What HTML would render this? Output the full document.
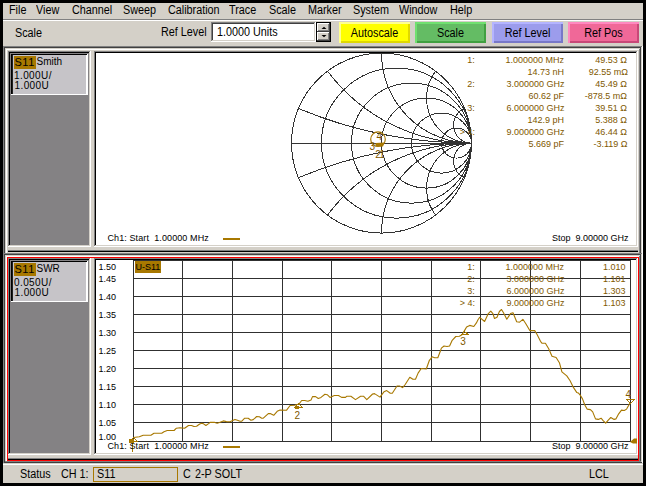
<!DOCTYPE html>
<html><head><meta charset="utf-8"><style>
html,body{margin:0;padding:0;}
body{width:646px;height:486px;background:#000;position:relative;overflow:hidden;font-family:"Liberation Sans",sans-serif;}
div{position:absolute;}
.t{position:absolute;white-space:nowrap;line-height:1;}
</style></head><body>
<div style="left:3px;top:3px;width:640px;height:16px;background:#d4d0c8;"></div>
<div style="left:3px;top:19px;width:640px;height:1px;background:#808080;"></div>
<div style="left:3px;top:20px;width:640px;height:1px;background:#ffffff;"></div>
<span class="t" style="left:9.0px;top:3.84px;font-size:12px;color:#000;transform:scaleX(0.9);transform-origin:left top;">File</span>
<span class="t" style="left:36.300000000000004px;top:3.84px;font-size:12px;color:#000;transform:scaleX(0.9);transform-origin:left top;">View</span>
<span class="t" style="left:71.8px;top:3.84px;font-size:12px;color:#000;transform:scaleX(0.9);transform-origin:left top;">Channel</span>
<span class="t" style="left:123.2px;top:3.84px;font-size:12px;color:#000;transform:scaleX(0.9);transform-origin:left top;">Sweep</span>
<span class="t" style="left:168.2px;top:3.84px;font-size:12px;color:#000;transform:scaleX(0.9);transform-origin:left top;">Calibration</span>
<span class="t" style="left:229.2px;top:3.84px;font-size:12px;color:#000;transform:scaleX(0.9);transform-origin:left top;">Trace</span>
<span class="t" style="left:269.2px;top:3.84px;font-size:12px;color:#000;transform:scaleX(0.9);transform-origin:left top;">Scale</span>
<span class="t" style="left:308.2px;top:3.84px;font-size:12px;color:#000;transform:scaleX(0.9);transform-origin:left top;">Marker</span>
<span class="t" style="left:352.7px;top:3.84px;font-size:12px;color:#000;transform:scaleX(0.9);transform-origin:left top;">System</span>
<span class="t" style="left:398.7px;top:3.84px;font-size:12px;color:#000;transform:scaleX(0.9);transform-origin:left top;">Window</span>
<span class="t" style="left:450.2px;top:3.84px;font-size:12px;color:#000;transform:scaleX(0.9);transform-origin:left top;">Help</span>
<div style="left:3px;top:21px;width:640px;height:25px;background:#d4d0c8;"></div>
<span class="t" style="left:15px;top:26.64px;font-size:12px;color:#000;transform:scaleX(0.9);transform-origin:left top;">Scale</span>
<span class="t" style="left:160.5px;top:26.04px;font-size:12px;color:#000;transform:scaleX(0.9);transform-origin:left top;">Ref Level</span>
<div style="left:211px;top:22px;width:105px;height:20px;background:#ffffff;"></div>
<div style="left:211px;top:22px;width:104px;height:1px;background:#808080;"></div>
<div style="left:211px;top:22px;width:1px;height:19px;background:#808080;"></div>
<div style="left:212px;top:23px;width:102px;height:1px;background:#404040;"></div>
<div style="left:212px;top:23px;width:1px;height:17px;background:#404040;"></div>
<div style="left:211px;top:41px;width:105px;height:1px;background:#ffffff;"></div>
<div style="left:315px;top:22px;width:1px;height:20px;background:#ffffff;"></div>
<div style="left:212px;top:40px;width:103px;height:1px;background:#d4d0c8;"></div>
<div style="left:314px;top:23px;width:1px;height:18px;background:#d4d0c8;"></div>
<span class="t" style="left:217.3px;top:25.84px;font-size:12px;color:#000;transform:scaleX(0.9);transform-origin:left top;">1.0000 Units</span>
<div style="left:316px;top:22px;width:15px;height:20px;background:#000;"></div>
<div style="left:317px;top:23px;width:13px;height:9px;background:#d4d0c8;"></div>
<div style="left:317px;top:23px;width:12px;height:1px;background:#ffffff;"></div>
<div style="left:317px;top:23px;width:1px;height:8px;background:#ffffff;"></div>
<div style="left:317px;top:31px;width:13px;height:1px;background:#404040;"></div>
<div style="left:329px;top:23px;width:1px;height:9px;background:#404040;"></div>
<div style="left:318px;top:30px;width:11px;height:1px;background:#808080;"></div>
<div style="left:328px;top:24px;width:1px;height:7px;background:#808080;"></div>
<div style="left:317px;top:32px;width:13px;height:9px;background:#d4d0c8;"></div>
<div style="left:317px;top:32px;width:12px;height:1px;background:#ffffff;"></div>
<div style="left:317px;top:32px;width:1px;height:8px;background:#ffffff;"></div>
<div style="left:317px;top:40px;width:13px;height:1px;background:#404040;"></div>
<div style="left:329px;top:32px;width:1px;height:9px;background:#404040;"></div>
<div style="left:318px;top:39px;width:11px;height:1px;background:#808080;"></div>
<div style="left:328px;top:33px;width:1px;height:7px;background:#808080;"></div>
<svg style="position:absolute;left:0;top:0" width="646" height="486"><path d="M321.5 29h5l-2.5-2.2z" fill="#000"/><path d="M321.5 35h5l-2.5 2.2z" fill="#000"/></svg>
<div style="left:339px;top:22px;width:71px;height:21px;background:#ffff00;"></div>
<div style="left:341px;top:41px;width:69px;height:2px;background:#e0d800;"></div>
<div style="left:408px;top:24px;width:2px;height:19px;background:#e0d800;"></div>
<div style="left:339px;top:22px;width:71px;height:2px;background:#ffff90;"></div>
<div style="left:339px;top:22px;width:2px;height:21px;background:#ffff90;"></div>
<span class="t" style="left:339px;width:71px;text-align:center;top:26.64px;font-size:12px;transform:scaleX(0.9);transform-origin:center top">Autoscale</span>
<div style="left:415px;top:22px;width:71px;height:21px;background:#64bc64;"></div>
<div style="left:417px;top:41px;width:69px;height:2px;background:#40a040;"></div>
<div style="left:484px;top:24px;width:2px;height:19px;background:#40a040;"></div>
<div style="left:415px;top:22px;width:71px;height:2px;background:#70e070;"></div>
<div style="left:415px;top:22px;width:2px;height:21px;background:#70e070;"></div>
<span class="t" style="left:415px;width:71px;text-align:center;top:26.64px;font-size:12px;transform:scaleX(0.9);transform-origin:center top">Scale</span>
<div style="left:492px;top:22px;width:71px;height:21px;background:#9c9cec;"></div>
<div style="left:494px;top:41px;width:69px;height:2px;background:#7878c8;"></div>
<div style="left:561px;top:24px;width:2px;height:19px;background:#7878c8;"></div>
<div style="left:492px;top:22px;width:71px;height:2px;background:#b4b4ff;"></div>
<div style="left:492px;top:22px;width:2px;height:21px;background:#b4b4ff;"></div>
<span class="t" style="left:492px;width:71px;text-align:center;top:26.64px;font-size:12px;transform:scaleX(0.9);transform-origin:center top">Ref Level</span>
<div style="left:568px;top:22px;width:71px;height:21px;background:#f06898;"></div>
<div style="left:570px;top:41px;width:69px;height:2px;background:#c84878;"></div>
<div style="left:637px;top:24px;width:2px;height:19px;background:#c84878;"></div>
<div style="left:568px;top:22px;width:71px;height:2px;background:#ff88c0;"></div>
<div style="left:568px;top:22px;width:2px;height:21px;background:#ff88c0;"></div>
<span class="t" style="left:568px;width:71px;text-align:center;top:26.64px;font-size:12px;transform:scaleX(0.9);transform-origin:center top">Ref Pos</span>
<div style="left:3px;top:46px;width:640px;height:418px;background:#d4d0c8;"></div>
<div style="left:3px;top:46px;width:640px;height:208px;background:#d4d0c8;"></div>
<div style="left:3px;top:46px;width:640px;height:1px;background:#808080;"></div>
<div style="left:3px;top:46px;width:1px;height:213px;background:#808080;"></div>
<div style="left:4px;top:47px;width:638px;height:1px;background:#404040;"></div>
<div style="left:4px;top:47px;width:1px;height:212px;background:#404040;"></div>
<div style="left:5px;top:48px;width:636px;height:1px;background:#d4d0c8;"></div>
<div style="left:5px;top:48px;width:1px;height:211px;background:#d4d0c8;"></div>
<div style="left:6px;top:49px;width:634px;height:1px;background:#ffffff;"></div>
<div style="left:6px;top:49px;width:1px;height:210px;background:#ffffff;"></div>
<div style="left:642px;top:46px;width:1px;height:213px;background:#ffffff;"></div>
<div style="left:641px;top:47px;width:1px;height:212px;background:#d4d0c8;"></div>
<div style="left:640px;top:48px;width:1px;height:211px;background:#404040;"></div>
<div style="left:639px;top:49px;width:1px;height:210px;background:#808080;"></div>
<div style="left:7px;top:50px;width:632px;height:1px;background:#d4d0c8;"></div>
<div style="left:7px;top:50px;width:1px;height:203px;background:#d4d0c8;"></div>
<div style="left:638px;top:50px;width:1px;height:203px;background:#d4d0c8;"></div>
<div style="left:8px;top:51px;width:83px;height:196px;background:#808080;"></div>
<div style="left:8px;top:51px;width:82px;height:1px;background:#808080;"></div>
<div style="left:8px;top:51px;width:1px;height:195px;background:#808080;"></div>
<div style="left:9px;top:52px;width:80px;height:1px;background:#000;"></div>
<div style="left:9px;top:52px;width:1px;height:193px;background:#000;"></div>
<div style="left:10px;top:53px;width:79px;height:192px;background:#848284;"></div>
<div style="left:9px;top:245px;width:81px;height:1px;background:#d4d0c8;"></div>
<div style="left:89px;top:52px;width:1px;height:194px;background:#d4d0c8;"></div>
<div style="left:8px;top:246px;width:83px;height:1px;background:#ffffff;"></div>
<div style="left:90px;top:51px;width:1px;height:196px;background:#ffffff;"></div>
<div style="left:94px;top:51px;width:543px;height:1px;background:#808080;"></div>
<div style="left:94px;top:51px;width:1px;height:195px;background:#808080;"></div>
<div style="left:95px;top:52px;width:541px;height:1px;background:#000;"></div>
<div style="left:95px;top:52px;width:1px;height:193px;background:#000;"></div>
<div style="left:96px;top:53px;width:540px;height:192px;background:#ffffff;"></div>
<div style="left:95px;top:245px;width:542px;height:1px;background:#d4d0c8;"></div>
<div style="left:636px;top:52px;width:1px;height:194px;background:#d4d0c8;"></div>
<div style="left:94px;top:246px;width:544px;height:1px;background:#ffffff;"></div>
<div style="left:637px;top:51px;width:1px;height:196px;background:#ffffff;"></div>
<div style="left:8px;top:250px;width:630px;height:1px;background:#808080;"></div>
<div style="left:8px;top:251px;width:630px;height:1px;background:#000000;"></div>
<div style="left:7px;top:252px;width:632px;height:1px;background:#d4d0c8;"></div>
<div style="left:5px;top:253px;width:636px;height:1px;background:#808080;"></div>
<div style="left:4px;top:254px;width:638px;height:1px;background:#404040;"></div>
<div style="left:3px;top:255px;width:640px;height:1px;background:#d4d0c8;"></div>
<div style="left:3px;top:256px;width:640px;height:1px;background:#ffffff;"></div>
<div style="left:11px;top:54px;width:77px;height:41px;background:#c6c4c8;"></div>
<div style="left:11px;top:54px;width:77px;height:1px;background:#000;"></div>
<div style="left:11px;top:54px;width:1px;height:41px;background:#000;"></div>
<div style="left:12px;top:55px;width:1px;height:39px;background:#202020;"></div>
<div style="left:11px;top:94px;width:77px;height:1px;background:#ffffff;"></div>
<div style="left:87px;top:54px;width:1px;height:41px;background:#ffffff;"></div>
<div style="left:86px;top:55px;width:1px;height:40px;background:#ffffff;"></div>
<div style="left:14px;top:56px;width:22px;height:13px;background:#a87800;"></div>
<span class="t" style="left:14.5px;top:56.99px;font-size:11px;color:#000;letter-spacing:0.5px">S11</span>
<span class="t" style="left:36.5px;top:56.53px;font-size:10px;color:#000;">Smith</span>
<span class="t" style="left:14px;top:70.53px;font-size:10px;color:#000;letter-spacing:0.4px">1.000U/</span>
<span class="t" style="left:14.5px;top:80.73px;font-size:10px;color:#000;letter-spacing:0.4px">1.000U</span>
<div style="left:3px;top:253px;width:640px;height:209px;background:#d4d0c8;"></div>
<div style="left:3px;top:253px;width:640px;height:1px;background:#808080;"></div>
<div style="left:3px;top:253px;width:1px;height:214px;background:#808080;"></div>
<div style="left:4px;top:254px;width:638px;height:1px;background:#404040;"></div>
<div style="left:4px;top:254px;width:1px;height:213px;background:#404040;"></div>
<div style="left:5px;top:255px;width:636px;height:1px;background:#d4d0c8;"></div>
<div style="left:5px;top:255px;width:1px;height:212px;background:#d4d0c8;"></div>
<div style="left:6px;top:256px;width:634px;height:1px;background:#ffffff;"></div>
<div style="left:6px;top:256px;width:1px;height:211px;background:#ffffff;"></div>
<div style="left:642px;top:253px;width:1px;height:214px;background:#ffffff;"></div>
<div style="left:641px;top:254px;width:1px;height:213px;background:#d4d0c8;"></div>
<div style="left:640px;top:255px;width:1px;height:212px;background:#404040;"></div>
<div style="left:639px;top:256px;width:1px;height:211px;background:#808080;"></div>
<div style="left:7px;top:257px;width:632px;height:1px;background:#ff0000;"></div>
<div style="left:7px;top:257px;width:1px;height:204px;background:#ff0000;"></div>
<div style="left:638px;top:257px;width:1px;height:204px;background:#ff0000;"></div>
<div style="left:8px;top:258px;width:83px;height:197px;background:#808080;"></div>
<div style="left:8px;top:258px;width:82px;height:1px;background:#808080;"></div>
<div style="left:8px;top:258px;width:1px;height:196px;background:#808080;"></div>
<div style="left:9px;top:259px;width:80px;height:1px;background:#000;"></div>
<div style="left:9px;top:259px;width:1px;height:194px;background:#000;"></div>
<div style="left:10px;top:260px;width:79px;height:193px;background:#848284;"></div>
<div style="left:9px;top:453px;width:81px;height:1px;background:#d4d0c8;"></div>
<div style="left:89px;top:259px;width:1px;height:195px;background:#d4d0c8;"></div>
<div style="left:8px;top:454px;width:83px;height:1px;background:#ffffff;"></div>
<div style="left:90px;top:258px;width:1px;height:197px;background:#ffffff;"></div>
<div style="left:94px;top:258px;width:543px;height:1px;background:#808080;"></div>
<div style="left:94px;top:258px;width:1px;height:196px;background:#808080;"></div>
<div style="left:95px;top:259px;width:541px;height:1px;background:#000;"></div>
<div style="left:95px;top:259px;width:1px;height:194px;background:#000;"></div>
<div style="left:96px;top:260px;width:540px;height:193px;background:#ffffff;"></div>
<div style="left:95px;top:453px;width:542px;height:1px;background:#d4d0c8;"></div>
<div style="left:636px;top:259px;width:1px;height:195px;background:#d4d0c8;"></div>
<div style="left:94px;top:454px;width:544px;height:1px;background:#ffffff;"></div>
<div style="left:637px;top:258px;width:1px;height:197px;background:#ffffff;"></div>
<div style="left:8px;top:458px;width:630px;height:1px;background:#808080;"></div>
<div style="left:8px;top:459px;width:630px;height:1px;background:#000000;"></div>
<div style="left:7px;top:460px;width:632px;height:1px;background:#ff0000;"></div>
<div style="left:5px;top:461px;width:636px;height:1px;background:#808080;"></div>
<div style="left:4px;top:462px;width:638px;height:1px;background:#404040;"></div>
<div style="left:3px;top:463px;width:640px;height:1px;background:#d4d0c8;"></div>
<div style="left:3px;top:464px;width:640px;height:1px;background:#ffffff;"></div>
<div style="left:11px;top:261px;width:77px;height:41px;background:#c6c4c8;"></div>
<div style="left:11px;top:261px;width:77px;height:1px;background:#000;"></div>
<div style="left:11px;top:261px;width:1px;height:41px;background:#000;"></div>
<div style="left:12px;top:262px;width:1px;height:39px;background:#202020;"></div>
<div style="left:11px;top:301px;width:77px;height:1px;background:#ffffff;"></div>
<div style="left:87px;top:261px;width:1px;height:41px;background:#ffffff;"></div>
<div style="left:86px;top:262px;width:1px;height:40px;background:#ffffff;"></div>
<div style="left:14px;top:263px;width:22px;height:13px;background:#a87800;"></div>
<span class="t" style="left:14.5px;top:263.99px;font-size:11px;color:#000;letter-spacing:0.5px">S11</span>
<span class="t" style="left:36.5px;top:263.54px;font-size:10px;color:#000;">SWR</span>
<span class="t" style="left:14px;top:277.54px;font-size:10px;color:#000;letter-spacing:0.4px">0.050U/</span>
<span class="t" style="left:14.5px;top:287.74px;font-size:10px;color:#000;letter-spacing:0.4px">1.000U</span>
<div style="left:3px;top:465px;width:640px;height:18px;background:#d4d0c8;"></div>
<span class="t" style="left:19.5px;top:468.14px;font-size:12px;color:#000;transform:scaleX(0.9);transform-origin:left top;">Status</span>
<span class="t" style="left:60.5px;top:468.14px;font-size:12px;color:#000;transform:scaleX(0.9);transform-origin:left top;">CH 1:</span>
<div style="left:93px;top:467px;width:85px;height:15px;background:transparent;border:1px solid #a87800;box-sizing:border-box"></div>
<span class="t" style="left:96.5px;top:468.14px;font-size:12px;color:#000;transform:scaleX(0.9);transform-origin:left top;">S11</span>
<span class="t" style="left:182.5px;top:468.14px;font-size:12px;color:#000;transform:scaleX(0.9);transform-origin:left top;">C</span>
<span class="t" style="left:195px;top:468.14px;font-size:12px;color:#000;transform:scaleX(0.9);transform-origin:left top;">2-P SOLT</span>
<span class="t" style="left:589px;top:468.14px;font-size:12px;color:#000;transform:scaleX(0.9);transform-origin:left top;">LCL</span>
<svg style="position:absolute;left:0;top:0" width="646" height="486"><g fill="none" stroke="#333" stroke-width="1" shape-rendering="crispEdges"><circle cx="381.5" cy="143.1" r="90"/><line x1="291.5" y1="143.5" x2="471.5" y2="143.5"/><circle cx="396.50" cy="143.1" r="75.00"/><circle cx="411.50" cy="143.1" r="60.00"/><circle cx="426.50" cy="143.1" r="45.00"/><circle cx="441.50" cy="143.1" r="30.00"/><circle cx="456.50" cy="143.1" r="15.00"/><path d="M298.42 108.48 A450.00 450.00 0 0 0 471.5 143.1"/><path d="M298.42 177.72 A450.00 450.00 0 0 1 471.5 143.1"/><path d="M327.50 71.10 A180.00 180.00 0 0 0 471.5 143.1"/><path d="M327.50 215.10 A180.00 180.00 0 0 1 471.5 143.1"/><path d="M381.50 53.10 A90.00 90.00 0 0 0 471.5 143.1"/><path d="M381.50 233.10 A90.00 90.00 0 0 1 471.5 143.1"/><path d="M435.50 71.10 A45.00 45.00 0 0 0 471.5 143.1"/><path d="M435.50 215.10 A45.00 45.00 0 0 1 471.5 143.1"/><path d="M464.58 108.48 A18.00 18.00 0 0 0 471.5 143.1"/><path d="M464.58 177.72 A18.00 18.00 0 0 1 471.5 143.1"/></g><g fill="none" stroke="#a87800" stroke-width="1.15"><circle cx="378" cy="139.2" r="7.3"/></g><path d="M375.5 143 L384.5 142.5 L383 146.5 L375.5 146.5 Z" fill="#a87800"/></svg>
<span class="t" style="left:376.5px;top:132.34px;font-size:10px;color:#805800;">4</span>
<span class="t" style="left:369.5px;top:142.34px;font-size:10px;color:#805800;">3</span>
<span class="t" style="left:375.3px;top:149.53px;font-size:10px;color:#805800;letter-spacing:-1.5px">21</span>
<span class="t" style="right:171px;top:55.44px;font-size:9.4px;color:#805800;text-align:right;transform:scaleX(0.96);transform-origin:right top;">1:</span>
<span class="t" style="right:81.70000000000005px;top:55.44px;font-size:9.4px;color:#805800;text-align:right;transform:scaleX(0.96);transform-origin:right top;">1.000000 MHz</span>
<span class="t" style="right:18.600000000000023px;top:55.44px;font-size:9.4px;color:#805800;text-align:right;transform:scaleX(0.96);transform-origin:right top;">49.53 &Omega;</span>
<span class="t" style="right:81.70000000000005px;top:67.39px;font-size:9.4px;color:#805800;text-align:right;transform:scaleX(0.96);transform-origin:right top;">14.73 nH</span>
<span class="t" style="right:18.600000000000023px;top:67.39px;font-size:9.4px;color:#805800;text-align:right;transform:scaleX(0.96);transform-origin:right top;">92.55 m&Omega;</span>
<span class="t" style="right:171px;top:79.34px;font-size:9.4px;color:#805800;text-align:right;transform:scaleX(0.96);transform-origin:right top;">2:</span>
<span class="t" style="right:81.70000000000005px;top:79.34px;font-size:9.4px;color:#805800;text-align:right;transform:scaleX(0.96);transform-origin:right top;">3.000000 GHz</span>
<span class="t" style="right:18.600000000000023px;top:79.34px;font-size:9.4px;color:#805800;text-align:right;transform:scaleX(0.96);transform-origin:right top;">45.49 &Omega;</span>
<span class="t" style="right:81.70000000000005px;top:91.29px;font-size:9.4px;color:#805800;text-align:right;transform:scaleX(0.96);transform-origin:right top;">60.62 pF</span>
<span class="t" style="right:18.600000000000023px;top:91.29px;font-size:9.4px;color:#805800;text-align:right;transform:scaleX(0.96);transform-origin:right top;">-878.5 m&Omega;</span>
<span class="t" style="right:171px;top:103.24px;font-size:9.4px;color:#805800;text-align:right;transform:scaleX(0.96);transform-origin:right top;">3:</span>
<span class="t" style="right:81.70000000000005px;top:103.24px;font-size:9.4px;color:#805800;text-align:right;transform:scaleX(0.96);transform-origin:right top;">6.000000 GHz</span>
<span class="t" style="right:18.600000000000023px;top:103.24px;font-size:9.4px;color:#805800;text-align:right;transform:scaleX(0.96);transform-origin:right top;">39.51 &Omega;</span>
<span class="t" style="right:81.70000000000005px;top:115.19px;font-size:9.4px;color:#805800;text-align:right;transform:scaleX(0.96);transform-origin:right top;">142.9 pH</span>
<span class="t" style="right:18.600000000000023px;top:115.19px;font-size:9.4px;color:#805800;text-align:right;transform:scaleX(0.96);transform-origin:right top;">5.388 &Omega;</span>
<span class="t" style="right:171px;top:127.14px;font-size:9.4px;color:#805800;text-align:right;transform:scaleX(0.96);transform-origin:right top;">> 4:</span>
<span class="t" style="right:81.70000000000005px;top:127.14px;font-size:9.4px;color:#805800;text-align:right;transform:scaleX(0.96);transform-origin:right top;">9.000000 GHz</span>
<span class="t" style="right:18.600000000000023px;top:127.14px;font-size:9.4px;color:#805800;text-align:right;transform:scaleX(0.96);transform-origin:right top;">46.44 &Omega;</span>
<span class="t" style="right:81.70000000000005px;top:139.09px;font-size:9.4px;color:#805800;text-align:right;transform:scaleX(0.96);transform-origin:right top;">5.669 pF</span>
<span class="t" style="right:18.600000000000023px;top:139.09px;font-size:9.4px;color:#805800;text-align:right;transform:scaleX(0.96);transform-origin:right top;">-3.119 &Omega;</span>
<span class="t" style="left:107.5px;top:233.88px;font-size:9px;color:#000;letter-spacing:0.1px">Ch1: Start&nbsp; 1.00000 MHz</span>
<div style="left:223px;top:238px;width:17px;height:2px;background:#a87800;"></div>
<span class="t" style="right:17.5px;top:233.88px;font-size:9px;color:#000;text-align:right;">Stop&nbsp; 9.00000 GHz</span>
<svg style="position:absolute;left:0;top:0" width="646" height="486"><g stroke="#000" stroke-width="1" shape-rendering="crispEdges" fill="none"><line x1="133.5" y1="260" x2="133.5" y2="442" stroke="#303030"/><line x1="182.5" y1="260" x2="182.5" y2="442" stroke="#303030"/><line x1="232.5" y1="260" x2="232.5" y2="442" stroke="#303030"/><line x1="282.5" y1="260" x2="282.5" y2="442" stroke="#303030"/><line x1="331.5" y1="260" x2="331.5" y2="442" stroke="#303030"/><line x1="381.5" y1="260" x2="381.5" y2="442" stroke="#303030"/><line x1="431.5" y1="260" x2="431.5" y2="442" stroke="#303030"/><line x1="480.5" y1="260" x2="480.5" y2="442" stroke="#303030"/><line x1="530.5" y1="260" x2="530.5" y2="442" stroke="#303030"/><line x1="580.5" y1="260" x2="580.5" y2="442" stroke="#303030"/><line x1="630.5" y1="260" x2="630.5" y2="442" stroke="#303030"/><line x1="133" y1="260.5" x2="631" y2="260.5" stroke="#303030"/><line x1="133" y1="278.5" x2="631" y2="278.5" stroke="#303030"/><line x1="133" y1="296.5" x2="631" y2="296.5" stroke="#303030"/><line x1="133" y1="314.5" x2="631" y2="314.5" stroke="#303030"/><line x1="133" y1="332.5" x2="631" y2="332.5" stroke="#303030"/><line x1="133" y1="350.5" x2="631" y2="350.5" stroke="#303030"/><line x1="133" y1="368.5" x2="631" y2="368.5" stroke="#303030"/><line x1="133" y1="386.5" x2="631" y2="386.5" stroke="#303030"/><line x1="133" y1="404.5" x2="631" y2="404.5" stroke="#303030"/><line x1="133" y1="422.5" x2="631" y2="422.5" stroke="#303030"/><line x1="133" y1="441.5" x2="631" y2="441.5" stroke="#303030"/></g><path d="M133.5 437.5 L139.3 436.7 L143.2 435.2 L150.9 435.2 L154.0 433.2 L161.7 433.2 L164.0 431.7 L167.2 430.5 L174.1 430.5 L176.4 428.2 L180.0 427.8 L184.6 428.2 L188.5 425.5 L191.6 425.5 L193.9 426.5 L196.6 426.3 L199.7 424.0 L201.7 423.2 L203.2 423.6 L205.9 425.5 L208.6 423.6 L210.2 422.4 L214.8 422.4 L217.2 423.2 L219.5 422.4 L223.3 420.9 L226.4 421.6 L230.0 421.8 L232.7 420.5 L235.0 419.4 L237.4 420.2 L240.1 421.3 L241.6 421.3 L244.7 418.2 L248.2 418.2 L250.9 420.2 L253.2 419.6 L256.7 416.5 L259.4 416.7 L261.7 418.2 L263.3 418.2 L268.3 413.6 L270.2 413.6 L273.7 415.3 L277.2 411.3 L280.0 410.0 L286.6 410.2 L290.1 405.5 L294.7 405.3 L299.0 404.0 L301.7 400.5 L304.8 400.5 L307.9 401.3 L311.0 400.1 L312.5 396.6 L315.6 396.6 L318.3 398.5 L321.0 397.4 L324.9 394.3 L327.2 394.7 L330.0 397.4 L334.3 395.5 L338.5 395.5 L341.6 397.4 L345.5 397.4 L346.6 396.3 L350.9 396.3 L355.5 399.6 L360.6 396.3 L363.7 396.3 L366.8 399.6 L372.6 394.0 L374.5 393.6 L380.0 397.1 L384.1 391.7 L386.7 390.6 L390.3 393.2 L392.3 393.2 L397.0 386.0 L399.5 386.0 L402.6 387.6 L405.2 384.5 L409.8 377.3 L412.9 379.3 L415.5 379.3 L418.1 373.1 L421.2 368.5 L426.3 369.0 L429.4 360.3 L430.6 358.9 L432.1 356.8 L434.7 357.8 L437.8 357.8 L440.3 351.2 L441.4 348.1 L444.0 346.0 L447.0 346.5 L449.6 346.0 L452.2 340.3 L455.8 336.5 L459.4 336.2 L462.0 334.7 L464.5 330.6 L466.6 327.0 L469.7 325.4 L473.8 326.5 L476.4 322.9 L478.0 319.8 L479.7 317.3 L484.6 321.5 L488.3 313.6 L490.8 311.1 L492.9 313.6 L494.5 318.5 L497.0 317.3 L499.4 311.5 L501.5 309.5 L503.5 312.7 L506.8 319.3 L510.5 313.6 L513.0 312.7 L516.7 321.8 L519.6 322.2 L522.9 319.3 L526.0 324.0 L529.8 330.6 L534.7 330.6 L537.2 334.8 L540.5 341.3 L542.1 343.3 L545.4 343.3 L548.7 348.7 L552.0 356.2 L556.1 357.5 L559.4 362.7 L561.9 371.8 L566.8 375.9 L570.1 380.8 L573.4 387.4 L576.7 392.4 L578.3 392.9 L580.6 395.7 L582.5 398.9 L584.8 405.0 L587.1 409.1 L590.4 409.6 L592.7 411.9 L595.5 418.9 L598.3 419.4 L601.1 418.2 L602.9 420.3 L605.7 423.1 L608.5 419.8 L610.8 417.5 L614.1 419.4 L615.9 418.9 L618.7 413.8 L621.5 410.1 L624.3 410.5 L626.6 409.1 L628.9 405.0 L630.3 402.6" fill="none" stroke="#a87800" stroke-width="1.1" stroke-linejoin="round"/></svg>
<span class="t" style="left:98.5px;top:262.68px;font-size:9px;color:#000;">1.50</span>
<span class="t" style="left:98.5px;top:274.58px;font-size:9px;color:#000;">1.45</span>
<span class="t" style="left:98.5px;top:292.58px;font-size:9px;color:#000;">1.40</span>
<span class="t" style="left:98.5px;top:310.58px;font-size:9px;color:#000;">1.35</span>
<span class="t" style="left:98.5px;top:328.58px;font-size:9px;color:#000;">1.30</span>
<span class="t" style="left:98.5px;top:346.58px;font-size:9px;color:#000;">1.25</span>
<span class="t" style="left:98.5px;top:364.58px;font-size:9px;color:#000;">1.20</span>
<span class="t" style="left:98.5px;top:382.58px;font-size:9px;color:#000;">1.15</span>
<span class="t" style="left:98.5px;top:400.58px;font-size:9px;color:#000;">1.10</span>
<span class="t" style="left:98.5px;top:418.58px;font-size:9px;color:#000;">1.05</span>
<span class="t" style="left:98.5px;top:433.18px;font-size:9px;color:#000;">1.00</span>
<div style="left:135px;top:261px;width:26px;height:12px;background:#a87800;"></div>
<span class="t" style="left:135.5px;top:263.38px;font-size:9px;color:#000;">U-S11</span>
<span class="t" style="right:171px;top:262.14px;font-size:9.4px;color:#805800;text-align:right;transform:scaleX(0.96);transform-origin:right top;">1:</span>
<span class="t" style="right:81.70000000000005px;top:262.14px;font-size:9.4px;color:#805800;text-align:right;transform:scaleX(0.96);transform-origin:right top;">1.000000 MHz</span>
<span class="t" style="right:20.700000000000045px;top:262.14px;font-size:9.4px;color:#805800;text-align:right;transform:scaleX(0.96);transform-origin:right top;">1.010</span>
<span class="t" style="right:171px;top:274.09px;font-size:9.4px;color:#805800;text-align:right;transform:scaleX(0.96);transform-origin:right top;">2:</span>
<span class="t" style="right:81.70000000000005px;top:274.09px;font-size:9.4px;color:#805800;text-align:right;transform:scaleX(0.96);transform-origin:right top;">3.000000 GHz</span>
<span class="t" style="right:20.700000000000045px;top:274.09px;font-size:9.4px;color:#805800;text-align:right;transform:scaleX(0.96);transform-origin:right top;">1.101</span>
<span class="t" style="right:171px;top:286.04px;font-size:9.4px;color:#805800;text-align:right;transform:scaleX(0.96);transform-origin:right top;">3:</span>
<span class="t" style="right:81.70000000000005px;top:286.04px;font-size:9.4px;color:#805800;text-align:right;transform:scaleX(0.96);transform-origin:right top;">6.000000 GHz</span>
<span class="t" style="right:20.700000000000045px;top:286.04px;font-size:9.4px;color:#805800;text-align:right;transform:scaleX(0.96);transform-origin:right top;">1.303</span>
<span class="t" style="right:171px;top:297.99px;font-size:9.4px;color:#805800;text-align:right;transform:scaleX(0.96);transform-origin:right top;">> 4:</span>
<span class="t" style="right:81.70000000000005px;top:297.99px;font-size:9.4px;color:#805800;text-align:right;transform:scaleX(0.96);transform-origin:right top;">9.000000 GHz</span>
<span class="t" style="right:20.700000000000045px;top:297.99px;font-size:9.4px;color:#805800;text-align:right;transform:scaleX(0.96);transform-origin:right top;">1.103</span>
<span class="t" style="left:294.5px;top:410.74px;font-size:10px;color:#805800;">2</span>
<svg style="position:absolute;left:0;top:0" width="646" height="486"><g fill="none" stroke="#a87800" stroke-width="1" shape-rendering="crispEdges"><path d="M129.5 441.5 L133.5 437.5 L137.5 441.5 Z"/><path d="M129 439h4v3h-4z" fill="#a87800"/><path d="M132.5 443V452M131.5 444.5h1"/><path d="M294.5 407.5 L298.5 403.5 L302.5 407.5 Z"/><path d="M295 406h3v2h-3z" fill="#a87800"/><path d="M461.5 334.5 L464.5 331.5 L468.5 334.5 Z"/><path d="M626.5 399.5 L630.5 403.5 L634.5 399.5 Z"/></g><path d="M630 442 L634 438.5 L637 438.5 L637 443.5 L633 443.5 Z" fill="#a87800"/></svg>
<span class="t" style="left:460.3px;top:337.34px;font-size:10px;color:#805800;">3</span>
<span class="t" style="left:625.6px;top:390.34px;font-size:10px;color:#805800;">4</span>
<span class="t" style="left:107.5px;top:442.38px;font-size:9px;color:#000;letter-spacing:0.1px">Ch1: Start&nbsp; 1.00000 MHz</span>
<div style="left:223px;top:446px;width:17px;height:2px;background:#a87800;"></div>
<span class="t" style="right:17.5px;top:442.38px;font-size:9px;color:#000;text-align:right;">Stop&nbsp; 9.00000 GHz</span>
</body></html>
